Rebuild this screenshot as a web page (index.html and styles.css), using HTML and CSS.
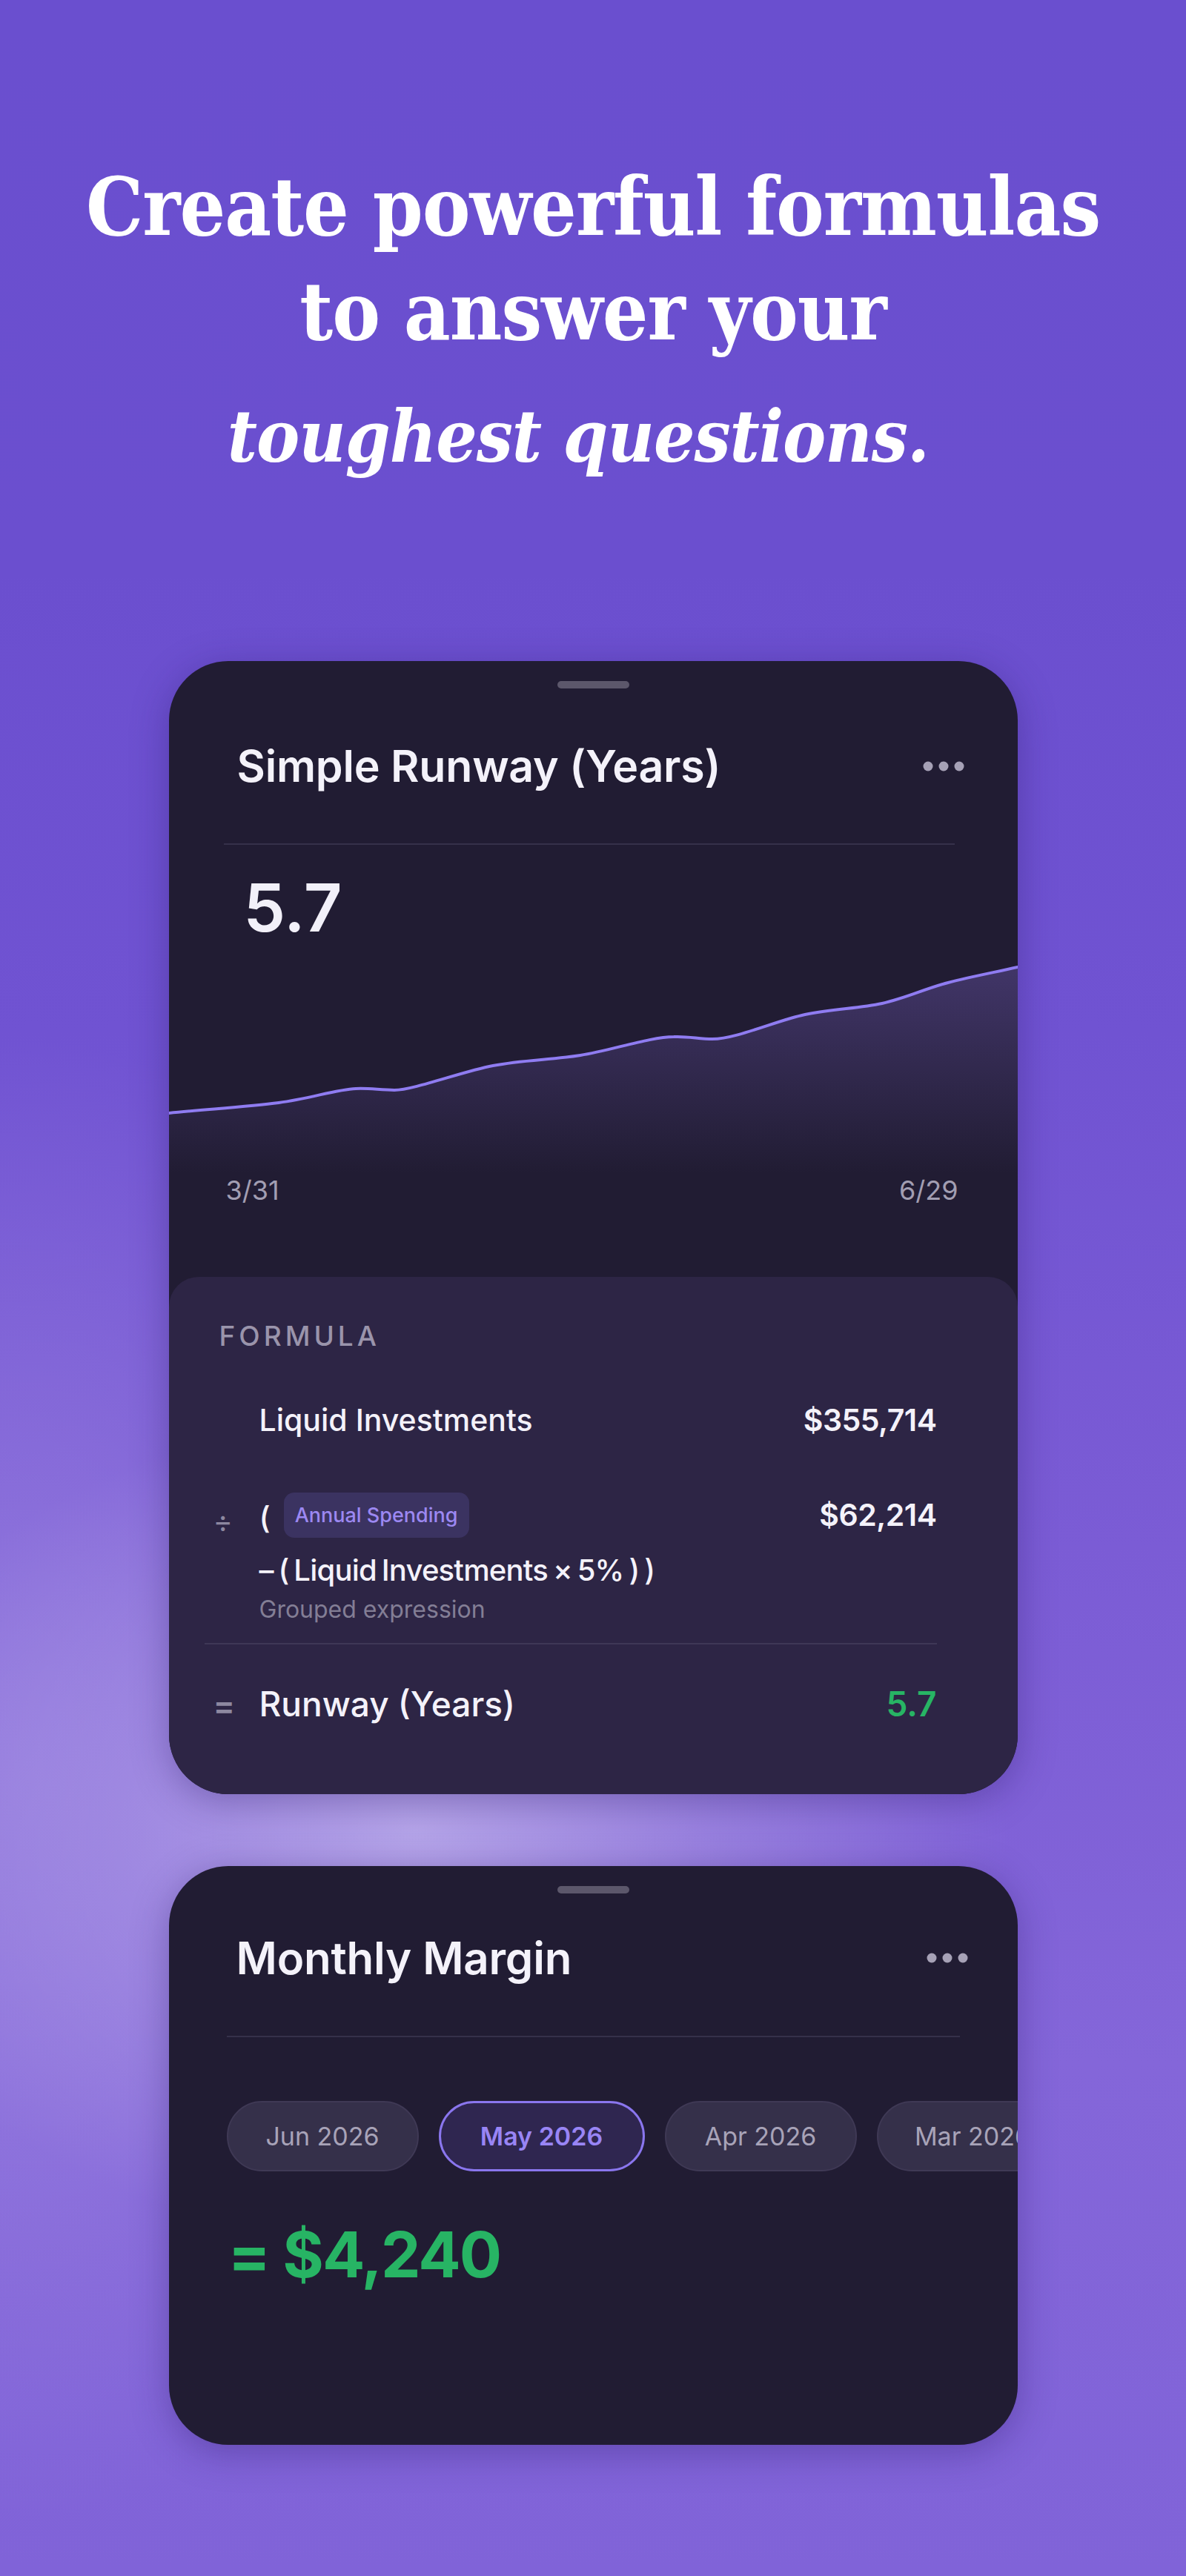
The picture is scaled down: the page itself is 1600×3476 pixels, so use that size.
FILE: index.html
```html
<!DOCTYPE html>
<html lang="en">
  <head>
    <meta charset="UTF-8" />
    <meta name="viewport" content="width=device-width, initial-scale=1.0" />
    <title>Formulas</title>
    <link rel="stylesheet" href="styles.css">
  </head>
  <body>
    <div class="page">
      <h1 class="headline">
        <span class="headline-line">Create powerful formulas</span>
        <span class="headline-line">to answer your</span>
        <span class="headline-line headline-em">toughest questions.</span>
      </h1>

      <section class="card card-runway">
        <div class="handle"></div>
        <div class="card-head">
          <h2 class="card-title">Simple Runway (Years)</h2>
          <svg class="more" width="56" height="14" viewBox="0 0 56 14">
            <circle cx="7" cy="7" r="6.5" />
            <circle cx="28" cy="7" r="6.5" />
            <circle cx="49" cy="7" r="6.5" />
          </svg>
        </div>
        <div class="divider"></div>
        <div class="big-value">5.7</div>

        <svg class="chart" width="1145" height="293" viewBox="0 0 1145 293">
          <defs>
            <linearGradient id="chartFill" x1="0" y1="0" x2="0" y2="293" gradientUnits="userSpaceOnUse">
              <stop offset="0" stop-color="#8a6fe0" stop-opacity="0.32" />
              <stop offset="1" stop-color="#8a6fe0" stop-opacity="0" />
            </linearGradient>
          </defs>
          <path fill="url(#chartFill)" d="M0,211 C49,206 106,202.5 148,197 C190,191.5 226,179 252,178 C270,177 285,180 304,180 C330,180 395,155 437,147 C479,139 514,139.5 555,133 C596,126.5 650,108 681,108 C700,107 715,111 733,111 C765,111 820,86 858,78 C896,70 930,70 962,63 C994,56 1020,43 1051,35 C1081,27 1114,21 1145,14 L1145,293 L0,293 Z" />
          <path fill="none" stroke="#8f7cf1" stroke-width="4" stroke-linecap="round" d="M0,211 C49,206 106,202.5 148,197 C190,191.5 226,179 252,178 C270,177 285,180 304,180 C330,180 395,155 437,147 C479,139 514,139.5 555,133 C596,126.5 650,108 681,108 C700,107 715,111 733,111 C765,111 820,86 858,78 C896,70 930,70 962,63 C994,56 1020,43 1051,35 C1081,27 1114,21 1145,14" />
        </svg>
        <div class="chart-dates">
          <span>3/31</span>
          <span>6/29</span>
        </div>

        <div class="formula">
          <div class="formula-label">FORMULA</div>

          <div class="term term-first">
            <span class="op"></span>
            <div class="term-body">
              <div class="term-name">Liquid Investments</div>
            </div>
            <div class="term-value">$355,714</div>
          </div>

          <div class="term term-group">
            <span class="op op-divide">÷</span>
            <div class="term-body">
              <div class="group-open">
                <span class="paren">(</span>
                <span class="chip-ref">Annual Spending</span>
              </div>
              <div class="term-name group-rest">– ( Liquid Investments × 5% ) )</div>
              <div class="term-note">Grouped expression</div>
            </div>
            <div class="term-value term-value-chip">$62,214</div>
          </div>

          <div class="divider divider-formula"></div>

          <div class="term term-result">
            <span class="op op-equals">=</span>
            <div class="term-body">
              <div class="result-name">Runway (Years)</div>
            </div>
            <div class="result-value">5.7</div>
          </div>
        </div>
      </section>

      <section class="card card-margin">
        <div class="handle"></div>
        <div class="card-head">
          <h2 class="card-title">Monthly Margin</h2>
          <svg class="more" width="56" height="14" viewBox="0 0 56 14">
            <circle cx="7" cy="7" r="6.5" />
            <circle cx="28" cy="7" r="6.5" />
            <circle cx="49" cy="7" r="6.5" />
          </svg>
        </div>
        <div class="divider"></div>
        <div class="months">
          <span class="month">Jun 2026</span>
          <span class="month month-active">May 2026</span>
          <span class="month">Apr 2026</span>
          <span class="month">Mar 2026</span>
        </div>
        <div class="margin-total">= $4,240</div>
      </section>
    </div>
  </body>
</html>
```

FILE: styles.css
```css
html,
body {
  margin: 0;
  padding: 0;
}
body {
  width: 1600px;
  min-height: 3476px;
  font-family: Inter, "Noto Sans", sans-serif;
  color: #f4f2fa;
  background:
    radial-gradient(ellipse 1000px 700px at 560px 2470px, rgba(184, 168, 234, 0.95) 0%, rgba(168, 148, 228, 0.6) 40%, rgba(150, 125, 222, 0) 80%),
    radial-gradient(ellipse 600px 1000px at 40px 2400px, rgba(165, 145, 228, 0.55) 0%, rgba(160, 140, 226, 0) 100%),
    linear-gradient(180deg, #6a4fcf 0%, #6b4fcf 22%, #7053d2 40%, #7b5cd5 60%, #8466d9 80%, #8063d8 100%);
}
.page {
  padding-top: 209px;
  padding-bottom: 180px;
}

/* headline */
.headline {
  margin: 0;
  font-family: "DejaVu Serif Condensed", "DejaVu Serif", serif;
  font-weight: bold;
  font-size: 108px;
  line-height: 141px;
  text-align: center;
  color: #ffffff;
  letter-spacing: -1px;
}
.headline-line {
  display: block;
}
.headline-em {
  font-style: italic;
  font-size: 97px;
  margin-top: 28px;
  padding-right: 40px;
}

/* cards */
.card {
  width: 1145px;
  margin: 0 auto;
  background-color: #211c33;
  border-radius: 80px;
  overflow: hidden;
  box-shadow: 0 10px 50px rgba(40, 22, 100, 0.35);
}
.card-runway {
  margin-top: 232px;
}
.card-margin {
  margin-top: 97px;
  height: 781px;
}
.handle {
  width: 97px;
  height: 10px;
  margin: 27px auto 0;
  border-radius: 5px;
  background-color: #5c576b;
}
.card-head {
  display: flex;
  justify-content: space-between;
  align-items: center;
  margin-top: 70px;
  padding: 0 72px 0 92px;
}
.card-margin .card-head {
  margin-top: 51px;
  padding: 0 67px 0 91px;
}
.card-title {
  margin: 0;
  font-size: 59px;
  line-height: 70px;
  font-weight: 600;
  color: #f4f2fa;
  letter-spacing: -0.2px;
}
.card-margin .card-title {
  font-size: 60px;
  line-height: 72px;
}
.more {
  display: block;
  fill: #a6a1b6;
}
.divider {
  height: 2px;
  margin: 69px 85px 0 74px;
  background-color: #35304a;
}
.card-margin .divider {
  margin: 69px 78px 0 78px;
}

/* runway value + chart */
.big-value {
  margin-top: 35px;
  padding-left: 101px;
  font-size: 90px;
  line-height: 100px;
  font-weight: 600;
  color: #f2f0f9;
}
.chart {
  display: block;
  margin-top: 16px;
}
.chart-dates {
  display: flex;
  justify-content: space-between;
  padding: 0 80px 0 77px;
  font-size: 36px;
  line-height: 44px;
  color: #a29eb2;
}

/* formula panel */
.formula {
  margin-top: 95px;
  padding: 58px 109px 92px 0;
  background-color: #2d2545;
  border-radius: 40px 40px 0 0;
}
.formula-label {
  padding-left: 68px;
  font-size: 37px;
  line-height: 44px;
  font-weight: 500;
  letter-spacing: 5px;
  color: #9a94ab;
}
.term {
  display: flex;
  align-items: flex-start;
}
.term-first {
  margin-top: 66px;
}
.term-group {
  margin-top: 73px;
}
.op {
  flex: 0 0 122px;
  box-sizing: border-box;
  padding-left: 60px;
  color: #8d88a0;
  font-size: 40px;
  line-height: 50px;
}
.op-divide {
  margin-top: 14px;
}
.op-equals {
  font-size: 44px;
  line-height: 56px;
  margin-top: 2px;
  font-weight: 600;
}
.term-body {
  flex: 1;
}
.term-name {
  font-size: 41px;
  line-height: 50px;
  font-weight: 500;
  color: #f4f2fa;
}
.term-value {
  font-size: 41px;
  line-height: 50px;
  font-weight: 600;
  color: #f4f2fa;
  letter-spacing: -0.5px;
}
.term-value-chip {
  margin-top: 5px;
}
.group-open {
  display: flex;
  align-items: center;
  gap: 18px;
  height: 61px;
}
.paren {
  font-size: 41px;
  line-height: 50px;
  font-weight: 500;
  margin-top: 6px;
}
.chip-ref {
  padding: 0 15px;
  height: 61px;
  line-height: 61px;
  border-radius: 14px;
  background-color: #3b3361;
  color: #9c88f2;
  font-size: 27px;
  font-weight: 500;
}
.group-rest {
  margin-top: 19px;
  font-size: 40px;
  word-spacing: -3px;
  letter-spacing: -0.8px;
}
.term-note {
  margin-top: 8px;
  font-size: 32px;
  line-height: 40px;
  color: #837e95;
}
.divider-formula {
  margin: 25px 0 0 48px;
  background-color: #3e3756;
}
.term-result {
  margin-top: 52px;
}
.result-name {
  font-size: 46px;
  line-height: 56px;
  font-weight: 500;
  color: #f4f2fa;
}
.result-value {
  font-size: 46px;
  line-height: 56px;
  font-weight: 600;
  color: #27b464;
}

/* monthly margin */
.months {
  display: flex;
  gap: 27px;
  margin-top: 86px;
  padding-left: 78px;
  white-space: nowrap;
}
.month {
  flex: 0 0 auto;
  box-sizing: border-box;
  width: 259px;
  height: 95px;
  line-height: 91px;
  text-align: center;
  border: 2px solid #3f3955;
  border-radius: 48px;
  background-color: #35304a;
  color: #a8a3b8;
  font-size: 34px;
}
.month-active {
  width: 278px;
  line-height: 89px;
  border: 3px solid #8a76ee;
  background-color: #2f2650;
  color: #9985f5;
  font-weight: 600;
}
.margin-total {
  margin-top: 63px;
  padding-left: 80px;
  font-size: 85px;
  line-height: 100px;
  font-weight: 700;
  color: #27b464;
  letter-spacing: -2px;
}
```
